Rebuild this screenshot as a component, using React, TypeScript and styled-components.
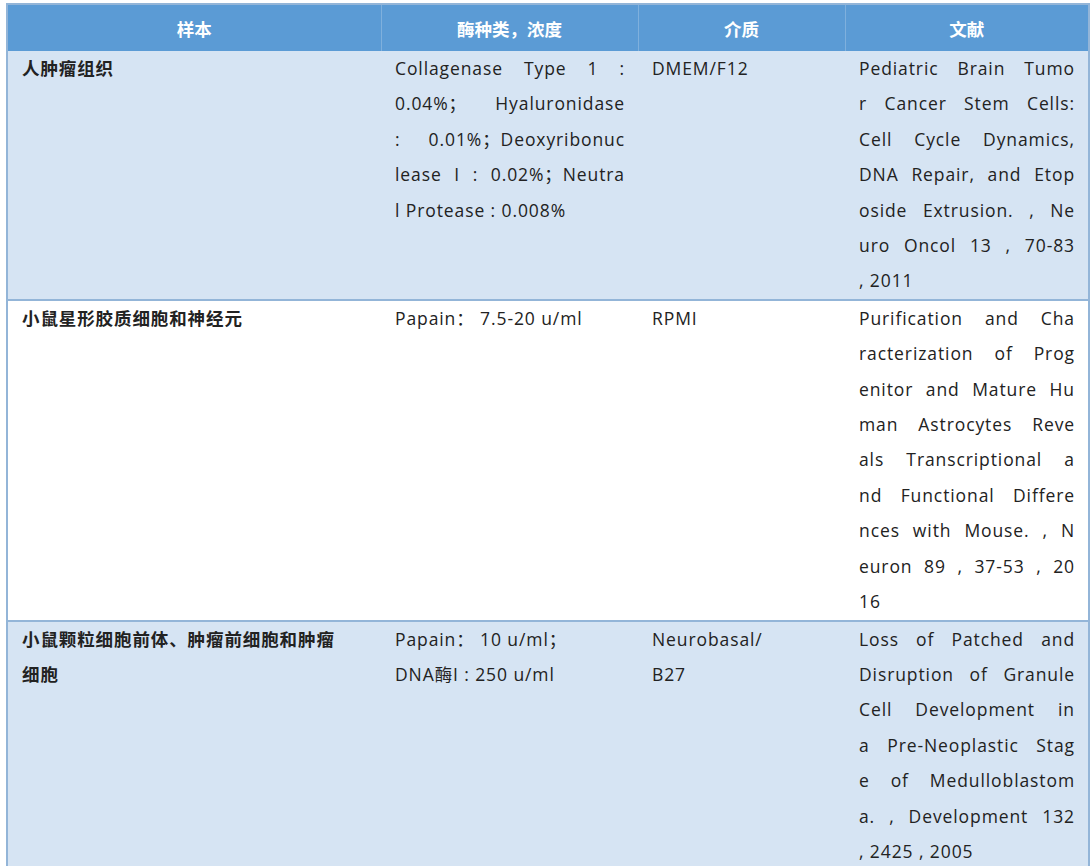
import styled, { createGlobalStyle } from "styled-components";

const Global = createGlobalStyle`
  body { margin: 0; background: #fff; }
`;

const Wrap = styled.div`
  padding: 3px 4px 0 6px;
`;

const Table = styled.table`
  width: 1082px;
  border-collapse: collapse;
  table-layout: fixed;
  border: 2px solid #93b5d8;
  font-family: "Open Sans", "Noto Sans CJK SC", sans-serif;
  font-size: 17.5px;
  color: #222;
`;

const Th = styled.th`
  background: #5b9bd5;
  color: #fff;
  font-weight: 700;
  height: 46px;
  padding: 0;
  border-right: 1px solid #7fb0dd;
  &:last-child { border-right: none; }
`;

const Row = styled.tr<{ $tint: boolean }>`
  background: ${(p) => (p.$tint ? "#d6e4f3" : "#ffffff")};
  border-bottom: 2px solid #93b5d8;
`;

const Td = styled.td<{ $bold?: boolean }>`
  vertical-align: top;
  padding: 0 13px 0 14px;
  line-height: 35.4px;
  letter-spacing: 0.9px;
  font-weight: ${(p) => (p.$bold ? 700 : 400)};
`;

const Line = styled.span<{ $fill: boolean }>`
  display: block;
  white-space: nowrap;
  text-align: justify;
  text-align-last: ${(p) => (p.$fill ? "justify" : "left")};
`;

const rows: string[][][] = [
  [
    ["人肿瘤组织"],
    ["Collagenase Type 1 :", "0.04%； Hyaluronidase", ": 0.01%；Deoxyribonuc", "lease I : 0.02%；Neutra", "l Protease : 0.008%"],
    ["DMEM/F12"],
    ["Pediatric Brain Tumo", "r Cancer Stem Cells:", "Cell Cycle Dynamics,", "DNA Repair, and Etop", "oside Extrusion. , Ne", "uro Oncol 13 , 70-83", ", 2011"],
  ],
  [
    ["小鼠星形胶质细胞和神经元"],
    ["Papain： 7.5-20 u/ml"],
    ["RPMI"],
    ["Purification and Cha", "racterization of Prog", "enitor and Mature Hu", "man Astrocytes Reve", "als Transcriptional a", "nd Functional Differe", "nces with Mouse. , N", "euron 89 , 37-53 , 20", "16"],
  ],
  [
    ["小鼠颗粒细胞前体、肿瘤前细胞和肿瘤", "细胞"],
    ["Papain： 10 u/ml；", "DNA酶I : 250 u/ml"],
    ["Neurobasal/", "B27"],
    ["Loss of Patched and", "Disruption of Granule", "Cell Development in", "a Pre-Neoplastic Stag", "e of Medulloblastom", "a. , Development 132", ", 2425 , 2005"],
  ],
];

export default function App() {
  return (
    <Wrap>
      <Global />
      <Table>
        <colgroup>
          <col style={{ width: 374 }} />
          <col style={{ width: 257 }} />
          <col style={{ width: 207 }} />
          <col style={{ width: 244 }} />
        </colgroup>
        <thead>
          <tr>
            <Th>样本</Th>
            <Th>酶种类，浓度</Th>
            <Th>介质</Th>
            <Th>文献</Th>
          </tr>
        </thead>
        <tbody>
          {rows.map((r, i) => (
            <Row key={i} $tint={i % 2 === 0}>
              {r.map((cell, c) => (
                <Td key={c} $bold={c === 0}>
                  {cell.map((l, k) => (
                    <Line key={k} $fill={c !== 0 && k < cell.length - 1 && cell.length > 2}>
                      {l}
                    </Line>
                  ))}
                </Td>
              ))}
            </Row>
          ))}
        </tbody>
      </Table>
    </Wrap>
  );
}
